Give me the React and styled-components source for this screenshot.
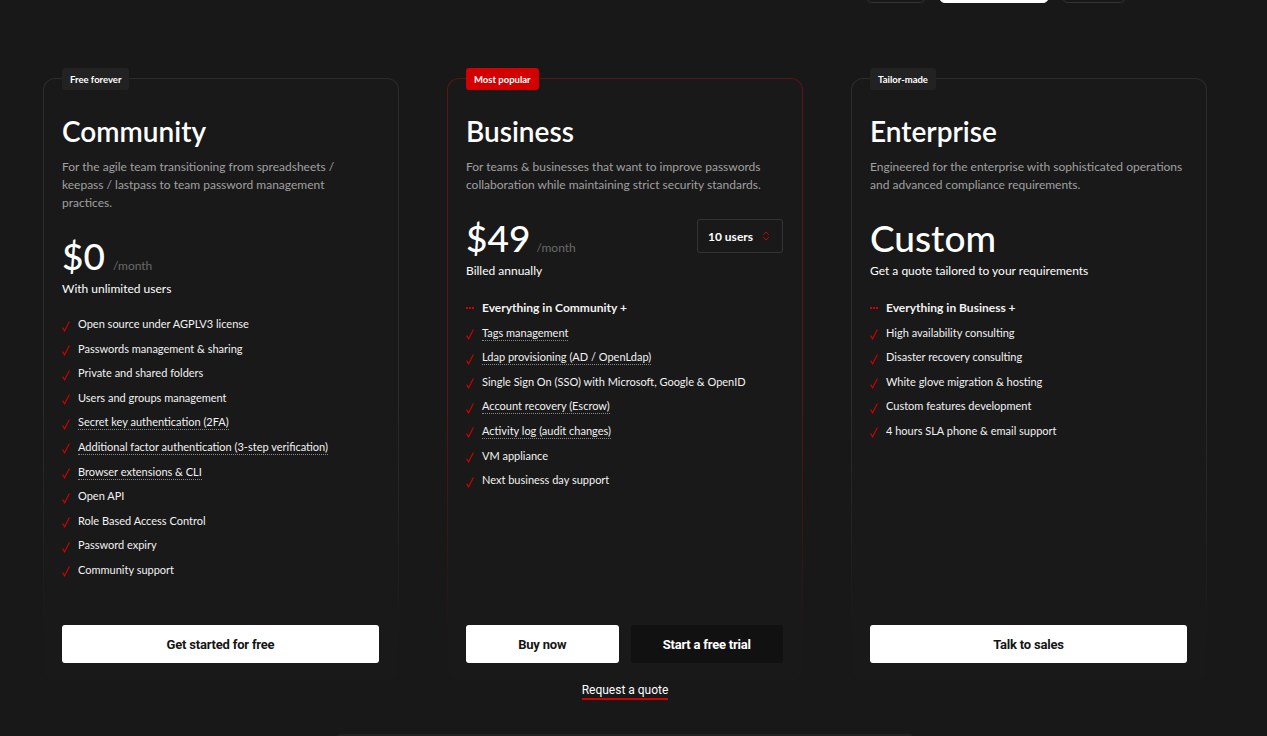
import React from 'react';
import styled, { createGlobalStyle } from 'styled-components';
import { ChevronsUpDown } from 'lucide-react';

const GlobalStyle = createGlobalStyle`
  html, body {
    margin: 0;
    padding: 0;
    background: #181818;
    color: #fff;
    font-family: "Lato", "Noto Sans", sans-serif;
    overflow: hidden;
  }
`;

const Page = styled.div`
  width: 1267px;
  height: 736px;
  overflow: hidden;
`;

const TopBar = styled.div`
  height: 3px;
  overflow: hidden;
  display: flex;
  align-items: flex-end;
  justify-content: flex-end;
  gap: 13px;
  padding-right: 141px;
`;

const Toggle = styled.div`
  width: ${(p) => p.w}px;
  height: 30px;
  flex: none;
  border-radius: 6px;
  box-sizing: border-box;
  border: 1px solid ${(p) => (p.active ? '#fff' : '#333')};
  background: ${(p) => (p.active ? '#fff' : 'transparent')};
`;

const Container = styled.div`
  width: 1164px;
  margin-left: 43px;
  display: flex;
  flex-direction: column;
  align-items: center;
`;

const Grid = styled.div`
  margin-top: 75px;
  width: 100%;
  display: grid;
  grid-template-columns: repeat(3, 356px);
  column-gap: 48px;
`;

const Card = styled.div`
  position: relative;
  min-height: 604px;
  box-sizing: border-box;
  padding: 34px 19px 18px 18px;
  border-radius: 12px;
  border: 1px solid transparent;
  background:
    linear-gradient(#191919, #191919) padding-box,
    linear-gradient(to bottom, ${(p) => p.edge} 0%, ${(p) => p.edge} 55%, rgba(25,25,25,0) 95%) border-box;
  display: flex;
  flex-direction: column;
`;

const Badge = styled.span`
  position: absolute;
  top: -11px;
  left: 18px;
  height: 22px;
  padding: 0 8px;
  display: flex;
  align-items: center;
  border-radius: 3px;
  background: ${(p) => (p.hot ? '#d20000' : '#222222')};
  color: #fff;
  font-size: 9.5px;
  font-weight: 700;
`;

const Title = styled.h2`
  margin: 0;
  font-size: 28px;
  line-height: 36px;
  font-weight: 600;
  color: #fff;
`;

const Desc = styled.p`
  margin: 9px 0 0 0;
  max-width: 314px;
  font-size: 12px;
  line-height: 18px;
  color: #a0a0a0;
`;

const PriceRow = styled.div`
  margin-top: 24px;
  display: flex;
  justify-content: space-between;
  align-items: flex-start;
`;

const Price = styled.div`
  display: flex;
  align-items: baseline;
  gap: ${(p) => (p.tight ? 6 : 8)}px;
  font-size: 37px;
  line-height: 40px;
  font-weight: 500;
  color: #fff;
`;

const Per = styled.span`
  font-size: 12px;
  line-height: 1;
  font-weight: 400;
  color: #6a6a6a;
`;

const Select = styled.div`
  width: 86px;
  height: 34px;
  box-sizing: border-box;
  margin-top: 1px;
  padding: 0 10px;
  display: flex;
  align-items: center;
  justify-content: space-between;
  border: 1px solid #333;
  border-radius: 3px;
  font-size: 12px;
  font-weight: 700;
  color: #fff;
`;

const Note = styled.div`
  margin-top: 5px;
  font-size: 12px;
  line-height: 16px;
  color: #fff;
`;

const List = styled.ul`
  margin: ${(p) => (p.short ? 19 : 21)}px 0 0 0;
  padding: 0;
  list-style: none;
  display: flex;
  flex-direction: column;
  gap: 8.6px;
`;

const Item = styled.li`
  display: flex;
  align-items: center;
  gap: 8px;
  line-height: 16px;
  color: #f2f2f2;
  font-weight: ${(p) => (p.head ? 700 : 400)};
  font-size: ${(p) => (p.head ? '12px' : '11px')};
`;

const ItemText = styled.span`
  border-bottom: 1px dotted ${(p) => (p.tip ? '#8a8a8a' : 'transparent')};
  line-height: 15px;
`;

const Dots = styled.span`
  width: 8px;
  display: flex;
  gap: 1px;
  span {
    width: 2px;
    height: 2px;
    background: #d20000;
  }
`;

const Actions = styled.div`
  margin-top: auto;
  display: flex;
  gap: 12px;
`;

const Button = styled.button`
  flex: 1;
  height: 38px;
  border: none;
  border-radius: 3px;
  background: ${(p) => (p.dark ? '#111111' : '#ffffff')};
  color: ${(p) => (p.dark ? '#ffffff' : '#151515')};
  font-family: "Liberation Sans Narrow", "Roboto", sans-serif;
  font-size: 13px;
  font-weight: 700;
  letter-spacing: -0.2px;
  cursor: pointer;
`;

const QuoteLink = styled.a`
  margin-top: 0;
  font-family: "Liberation Sans Narrow", "Roboto", sans-serif;
  font-size: 12px;
  line-height: 16px;
  color: #fff;
  text-decoration: none;
  border-bottom: 2px solid #d20000;
`;

const Footer = styled.div`
  margin-top: 34px;
  width: 580px;
  height: 40px;
  flex: none;
  background: #222;
  border-radius: 6px 6px 0 0;
`;

const Check = () => (
  <svg width="8" height="11" viewBox="0 0 8 11" style={{ flex: 'none', marginTop: 4 }}>
    <path d="M0.6 6.6 L2.6 9.8 L7.4 0.6" fill="none" stroke="#d20000" strokeWidth="1.1" />
  </svg>
);

const Feature = ({ text, tip }) => (
  <Item>
    <Check />
    <ItemText tip={tip}>{text}</ItemText>
  </Item>
);

const Everything = ({ text }) => (
  <Item head>
    <Dots><span /><span /><span /></Dots>
    <span>{text}</span>
  </Item>
);

const community = [
  ['Open source under AGPLV3 license'],
  ['Passwords management & sharing'],
  ['Private and shared folders'],
  ['Users and groups management'],
  ['Secret key authentication (2FA)', true],
  ['Additional factor authentication (3-step verification)', true],
  ['Browser extensions & CLI', true],
  ['Open API'],
  ['Role Based Access Control'],
  ['Password expiry'],
  ['Community support'],
];

const business = [
  ['Tags management', true],
  ['Ldap provisioning (AD / OpenLdap)', true],
  ['Single Sign On (SSO) with Microsoft, Google & OpenID'],
  ['Account recovery (Escrow)', true],
  ['Activity log (audit changes)', true],
  ['VM appliance'],
  ['Next business day support'],
];

const enterprise = [
  ['High availability consulting'],
  ['Disaster recovery consulting'],
  ['White glove migration & hosting'],
  ['Custom features development'],
  ['4 hours SLA phone & email support'],
];

const App = () => (
  <Page>
    <GlobalStyle />
    <TopBar>
      <Toggle w={60} />
      <Toggle w={110} active />
      <Toggle w={64} />
    </TopBar>
    <Container>
      <Grid>
        <Card edge="#2c2c2c">
          <Badge>Free forever</Badge>
          <Title>Community</Title>
          <Desc>For the agile team transitioning from spreadsheets / keepass / lastpass to team password management practices.</Desc>
          <PriceRow>
            <Price>$0<Per>/month</Per></Price>
          </PriceRow>
          <Note>With unlimited users</Note>
          <List short>
            {community.map(([t, tip]) => <Feature key={t} text={t} tip={tip} />)}
          </List>
          <Actions>
            <Button>Get started for free</Button>
          </Actions>
        </Card>

        <Card edge="#5a1418">
          <Badge hot>Most popular</Badge>
          <Title>Business</Title>
          <Desc>For teams &amp; businesses that want to improve passwords collaboration while maintaining strict security standards.</Desc>
          <PriceRow>
            <Price tight>$49<Per>/month</Per></Price>
            <Select>
              10 users
              <ChevronsUpDown size={12} color="#d20000" strokeWidth={2} />
            </Select>
          </PriceRow>
          <Note>Billed annually</Note>
          <List>
            <Everything text="Everything in Community +" />
            {business.map(([t, tip]) => <Feature key={t} text={t} tip={tip} />)}
          </List>
          <Actions>
            <Button>Buy now</Button>
            <Button dark>Start a free trial</Button>
          </Actions>
        </Card>

        <Card edge="#2c2c2c">
          <Badge>Tailor-made</Badge>
          <Title>Enterprise</Title>
          <Desc>Engineered for the enterprise with sophisticated operations and advanced compliance requirements.</Desc>
          <PriceRow>
            <Price>Custom</Price>
          </PriceRow>
          <Note>Get a quote tailored to your requirements</Note>
          <List>
            <Everything text="Everything in Business +" />
            {enterprise.map(([t]) => <Feature key={t} text={t} />)}
          </List>
          <Actions>
            <Button>Talk to sales</Button>
          </Actions>
        </Card>
      </Grid>
      <QuoteLink href="#">Request a quote</QuoteLink>
      <Footer />
    </Container>
  </Page>
);

export default App;
